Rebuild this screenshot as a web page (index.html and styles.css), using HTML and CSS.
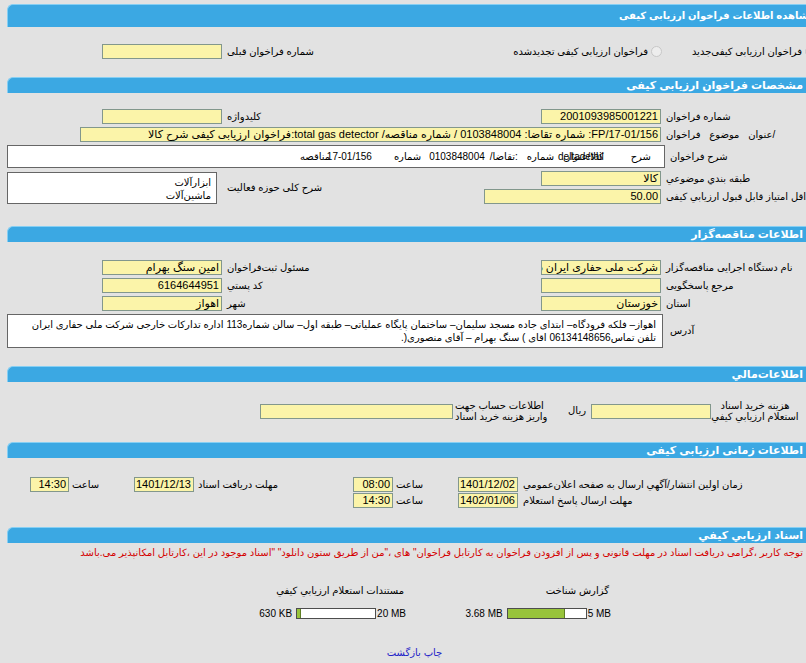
FILE: index.html
```html
<!DOCTYPE html>
<html lang="fa">
<head>
<meta charset="utf-8">
<title>مشاهده اطلاعات فراخوان ارزيابی کیفی</title>
<link rel="stylesheet" href="styles.css">
</head>
<body>
<div class="page" dir="rtl">
  <div class="bar bar-main">مشاهده اطلاعات فراخوان ارزيابی کیفی</div>

  <div class="form sec-type">
    <div class="opt opt-1"><span class="radio"></span><span>فراخوان ارزیابی کیفی‌جدید</span></div>
    <div class="opt opt-2"><span class="radio"></span><span>فراخوان ارزیابی کیفی تجدیدشده</span></div>
    <div class="lab">شماره فراخوان قبلی</div>
    <div class="cell"><div class="in"></div></div>
    <div></div>
  </div>

  <div class="bar">مشخصات فراخوان ارزيابی کیفی</div>
  <div class="form sec-spec">
    <div class="lab">شماره فراخوان</div>
    <div class="cell"><div class="in">2001093985001221</div></div>
    <div class="lab">کلیدواژه</div>
    <div class="cell"><div class="in"></div></div>
    <div></div>

    <div class="lab lab-wide">/عنوان موضوع فراخوان</div>
    <div class="cell span4"><div class="in w-title">FP/17-01/156: شماره تقاضا: 0103848004 / شماره مناقصه/ total gas detector:فراخوان ارزیابی کیفی شرح کالا</div></div>

    <div class="lab lab-box">شرح فراخوان</div>
    <div class="cell span4">
      <div class="box desc">
        <span class="d-head">شرح</span>
        <span class="ov ov-1"><span>کالا/عنوان</span><span class="lt">deltadetail</span></span>
        <span class="d-w d-1">شماره</span>
        <span class="d-w d-2">:تقاضا/</span>
        <span class="d-w d-3 lt">0103848004</span>
        <span class="d-w d-4">شماره</span>
        <span class="ov ov-2"><span class="lt">17-01/156</span><span class="sh">مناقصه</span></span>
      </div>
    </div>

    <div class="lab">طبقه بندي موضوعي</div>
    <div class="cell"><div class="in">کالا</div></div>
    <div class="lab rows2">شرح کلی حوزه فعالیت</div>
    <div class="cell span2 rows2"><div class="box activity">ابزارآلات<br>ماشین‌آلات</div></div>

    <div class="lab">حداقل امتیاز قابل قبول ارزيابي کیفی</div>
    <div class="cell"><div class="in w-score">50.00</div></div>
  </div>

  <div class="bar">اطلاعات مناقصه‌گزار</div>
  <div class="form sec-org">
    <div class="lab">نام دستگاه اجرایی مناقصه‌گزار</div>
    <div class="cell"><div class="in">شرکت ملی حفاری ایران در اهواز</div></div>
    <div class="lab">مسئول ثبت‌فراخوان</div>
    <div class="cell"><div class="in">امین سنگ بهرام</div></div>
    <div></div>

    <div class="lab">مرجع پاسخگویی</div>
    <div class="cell"><div class="in"></div></div>
    <div class="lab">كد پستي</div>
    <div class="cell"><div class="in">6164644951</div></div>
    <div></div>

    <div class="lab">استان</div>
    <div class="cell"><div class="in">خوزستان</div></div>
    <div class="lab">شهر</div>
    <div class="cell"><div class="in">اهواز</div></div>
    <div></div>

    <div class="lab lab-box">آدرس</div>
    <div class="cell span4">
      <div class="box addr">اهواز– فلکه فرودگاه– ابتدای جاده مسجد سلیمان– ساختمان پایگاه عملیاتی– طبقه اول– سالن شماره113 اداره تدارکات خارجی شرکت ملی حفاری ایران<br>تلفن تماس06134148656 اقای ) سنگ بهرام – آقای منصوری(.</div>
    </div>
  </div>

  <div class="bar">اطلاعات‌مالي</div>
  <div class="fin">
    <div class="fin-lab1">هزینه خرید اسناد<br>استعلام ارزيابي کیفي</div>
    <div class="in w-fee"></div>
    <div class="rial">ریال</div>
    <div class="fin-lab2">اطلاعات حساب جهت<br>واریز هزینه خرید اسناد</div>
    <div class="in w-acc"></div>
  </div>

  <div class="bar">اطلاعات زمانی ارزيابی کیفی</div>
  <div class="time">
    <div class="lab">زمان اولین انتشار/آگهي ارسال به صفحه اعلان‌عمومي</div>
    <div class="cell"><div class="in w-date">1401/12/02</div></div>
    <div class="lab">ساعت</div>
    <div class="cell"><div class="in w-hour">08:00</div></div>
    <div class="lab">مهلت دریافت اسناد</div>
    <div class="cell"><div class="in w-date2">1401/12/13</div></div>
    <div class="lab">ساعت</div>
    <div class="cell"><div class="in w-hour2">14:30</div></div>
    <div></div>

    <div class="lab">مهلت ارسال پاسخ استعلام</div>
    <div class="cell"><div class="in w-date">1402/01/06</div></div>
    <div class="lab">ساعت</div>
    <div class="cell"><div class="in w-hour">14:30</div></div>
  </div>

  <div class="bar">اسناد ارزيابي کیفي</div>
  <div class="note">توجه کاربر ،گرامی دریافت اسناد در مهلت قانونی و پس از افزودن فراخوان به کارتابل فراخوان" های ،"من از طریق ستون دانلود" "اسناد موجود در این ،کارتابل امکانپذیر می.باشد</div>

  <div class="files">
    <div class="file">
      <div class="file-title">گزارش شناخت</div>
      <div class="file-bar">
        <span class="size">5 MB</span>
        <span class="meter"><span class="fill" style="width:73.6%"></span></span>
        <span class="size used">3.68 MB</span>
      </div>
    </div>
    <div class="file">
      <div class="file-title">مستندات استعلام ارزيابي کیفي</div>
      <div class="file-bar">
        <span class="size">20 MB</span>
        <span class="meter"><span class="fill" style="width:3.1%"></span></span>
        <span class="size used">630 KB</span>
      </div>
    </div>
  </div>

  <div class="links"><a href="#">چاپ</a> <a href="#">بازگشت</a></div>
</div>
</body>
</html>
```

FILE: styles.css
```css
* { box-sizing: border-box; }

html, body {
  margin: 0;
  padding: 0;
  overflow: hidden;
  background: #e2e2e2;
}

body {
  font-family: "Liberation Sans", "DejaVu Sans", sans-serif;
  font-size: 10px;
  line-height: 12px;
  color: #000;
}

.page {
  width: 815px;
  margin-left: 7px;
  padding-top: 4px;
  direction: rtl;
}

/* section headers */
.bar {
  height: 16px;
  line-height: 15px;
  background: #3ba8e3;
  border-top: 1px solid #86cff3;
  border-left: 1px solid #86cff3;
  border-top-left-radius: 6px;
  color: #fff;
  font-weight: bold;
  font-size: 11px;
  padding-right: 19px;
  white-space: nowrap;
  overflow: hidden;
}

.bar-main {
  height: 23px;
  line-height: 22px;
  padding-right: 7px;
  font-size: 10px;
}

/* generic form grid */
.form {
  display: grid;
  grid-template-columns: 159px 243px 196px 124px 93px;
  row-gap: 3px;
  align-items: center;
}

.sec-type { margin: 17px 0 18px; }
.sec-spec { margin: 16px 0 22px; }
.sec-org { margin: 18px 0 18px; }

.lab {
  display: flex;
  justify-content: flex-end;
  white-space: nowrap;
  padding-left: 3px;
}

.lab-box { padding-left: 7px; }
.lab-wide { word-spacing: 6px; }

.span4 { grid-column: span 4; }
.span2 { grid-column: span 2; }
.rows2 { grid-row: span 2; }

.in {
  width: 120px;
  height: 15px;
  line-height: 13px;
  border: 1px solid #82978c;
  background: #fbf4a9;
  margin-right: 2px;
  padding: 0 2px;
  overflow: hidden;
  white-space: nowrap;
  font-size: 11px;
}

.w-title { width: 581px; }
.w-score { width: 177px; }

/* radio options */
.opt {
  display: flex;
  align-items: center;
  white-space: nowrap;
}

.radio {
  flex: none;
  width: 11px;
  height: 11px;
  border: 1px solid #c7c7c7;
  border-radius: 50%;
  background: #ededed;
  margin-left: 3px;
}

.opt-1 .radio { margin-right: 6px; }
.opt-2 .radio { margin-right: 1px; }

/* white boxes */
.box {
  background: #fff;
  border: 1px solid #666;
}

.desc {
  height: 23px;
  margin-right: -2px;
  display: flex;
  align-items: center;
  padding-right: 13px;
  white-space: nowrap;
  overflow: hidden;
}

.d-head { margin-left: 27px; }
.d-1 { margin-right: 4px; }
.d-2 { margin-right: 9px; }
.d-3 { margin-right: 5px; }
.d-4 { margin-right: 8px; margin-left: 22px; }

.ov { display: inline-grid; }
.ov > span { grid-area: 1 / 1; }
.ov-1 > span { justify-self: start; }
.ov-2 { width: 72px; }
.ov-2 .lt { justify-self: start; }
.ov-2 .sh { justify-self: end; }
.lt { direction: ltr; unicode-bidi: isolate; }

.activity {
  width: 210px;
  height: 32px;
  margin-right: 7px;
  padding: 3px 5px 0 0;
  line-height: 13px;
}

.addr {
  height: 34px;
  padding: 3px 6px 0 0;
  line-height: 13px;
  white-space: nowrap;
  overflow: hidden;
}

/* finance row */
.fin {
  display: flex;
  align-items: center;
  height: 22px;
  margin: 18px 0 20px;
}

.fin-lab1 {
  width: 90px;
  margin-right: 22px;
  text-align: center;
  line-height: 11px;
  white-space: nowrap;
}

.w-fee { width: 120px; margin-right: -1px; }

.rial {
  width: 19px;
  padding-right: 5px;
  white-space: nowrap;
}

.fin-lab2 {
  width: 117px;
  text-align: left;
  line-height: 11px;
  white-space: nowrap;
}

.w-acc { width: 193px; margin-right: 2px; }

/* time grid */
.time {
  display: grid;
  grid-template-columns: 302px 63px 64px 40px 158px 62px 64px 39px 23px;
  row-gap: 1px;
  align-items: center;
  margin: 19px 0 19px;
}

.w-date { width: 60px; }
.w-hour { width: 40px; margin-right: 0; }
.w-date2 { width: 60px; margin-right: 1px; }
.w-hour2 { width: 39px; margin-right: 0; }

/* documents */
.note {
  color: #d40000;
  padding-right: 19px;
  margin-top: 3px;
  line-height: 13px;
  white-space: nowrap;
}

.files {
  display: flex;
  margin-top: 26px;
  padding-right: 211px;
}

.file { width: 205px; }

.file-title {
  line-height: 12px;
  padding-right: 2px;
}

.file-bar {
  display: flex;
  align-items: center;
  height: 11px;
  margin-top: 11px;
}

.size {
  direction: ltr;
  unicode-bidi: isolate;
  white-space: nowrap;
}

.used { margin-right: 4px; }

.meter {
  display: flex;
  direction: ltr;
  width: 80px;
  height: 11px;
  margin-right: 1px;
  border: 1px solid #4d4d4d;
  background: #fff;
}

.fill {
  min-width: 4px;
  height: 100%;
  background: #98c43b;
  border-right: 1px solid #5f7f25;
}

.links {
  text-align: center;
  margin-top: 28px;
}

.links a {
  color: #2323c8;
  text-decoration: none;
}
```
